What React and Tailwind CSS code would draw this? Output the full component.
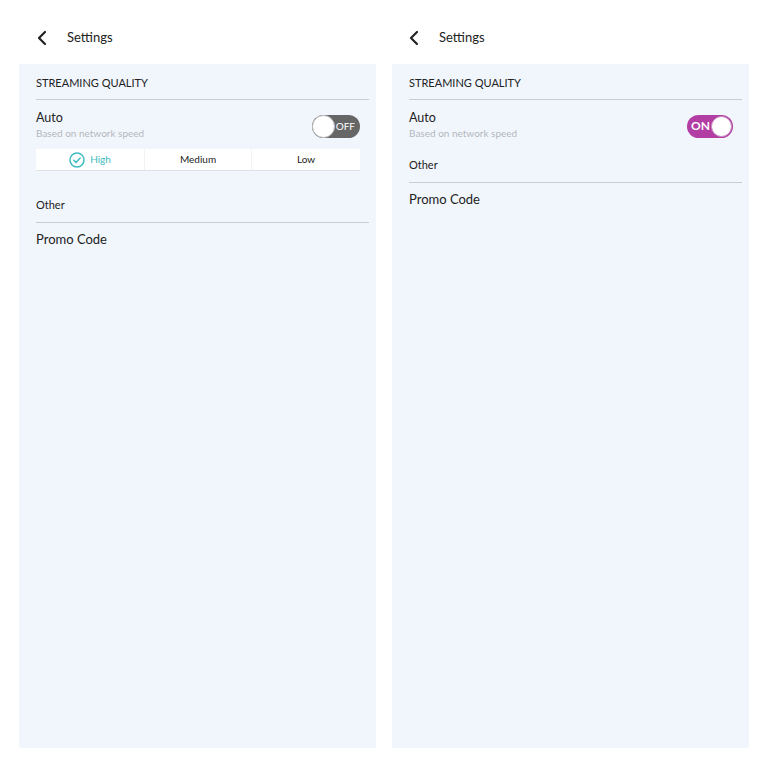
import { ChevronLeft } from 'lucide-react';

function Toggle({ on }) {
  if (on) {
    return (
      <div className="flex h-[23px] w-[46px] items-center justify-between rounded-full bg-[#b23ea3] pl-[4px] pr-[1px]">
        <span className="text-[12px] font-bold leading-none text-white">ON</span>
        <span className="h-[21px] w-[21px] rounded-full border border-[#c78fbf] bg-white" />
      </div>
    );
  }
  return (
    <div className="flex h-[23px] w-[48px] items-center justify-between rounded-full bg-[#666666] pr-[5px]">
      <span className="h-[23px] w-[23px] rounded-full border border-[#bdbdbd] bg-white" />
      <span className="text-[10px] leading-none text-white">OFF</span>
    </div>
  );
}

function Check() {
  return (
    <svg width="16" height="16" viewBox="0 0 16 16" fill="none">
      <circle cx="8" cy="8" r="7" stroke="#3fbcc3" strokeWidth="1.5" />
      <path d="M4.8 8.2l2.2 2.2 4.2-4.4" stroke="#3fbcc3" strokeWidth="1.5" strokeLinecap="round" strokeLinejoin="round" />
    </svg>
  );
}

function Screen({ on, pad }) {
  return (
    <div className="flex w-[357px] flex-col">
      <div className={`flex h-[64px] items-center pt-[11px] ${pad}`}>
        <ChevronLeft className="h-6 w-6 text-[#222]" strokeWidth={2.2} />
        <span className="ml-[13px] text-[13px] text-[#222]">Settings</span>
      </div>
      <div className="flex h-[684px] flex-col bg-[#f1f6fd] pr-[7px] pl-[17px]">
        <div className="flex h-[36px] items-center border-b border-[#c9ccd2] pt-1 text-[11px] text-[#222]">
          STREAMING QUALITY
        </div>
        <div className="flex items-center justify-between pt-[11px] pr-[9px]">
          <div className="flex flex-col">
            <span className="text-[12.5px] leading-[14px] text-[#222]">Auto</span>
            <span className="text-[10px] leading-[16px] text-[#b4b7bc]">Based on network speed</span>
          </div>
          <Toggle on={on} />
        </div>
        {on ? (
          <div className="flex h-[42px] items-end border-b border-[#c9ccd2] pb-[9px] text-[11px] text-[#222]">Other</div>
        ) : (
          <>
            <div className="mt-[8px] mr-[9px] grid h-[22px] grid-cols-3 border-b border-[#dde0e5] bg-white text-[10px] text-[#222]">
              <div className="flex items-center justify-center gap-[5px] text-[#3fbcc3]">
                <Check />
                <span>High</span>
              </div>
              <div className="flex items-center justify-center border-x border-[#f1f2f4]">Medium</div>
              <div className="flex items-center justify-center">Low</div>
            </div>
            <div className="flex h-[52px] items-end border-b border-[#c9ccd2] pb-[9px] text-[11px] text-[#222]">Other</div>
          </>
        )}
        <div className="pt-[8px] text-[13px] leading-[16px] text-[#222]">Promo Code</div>
      </div>
    </div>
  );
}

export default function App() {
  return (
    <div className="flex h-[768px] w-[768px] gap-[16px] bg-white pl-[19px] font-['Lato',sans-serif]">
      <Screen on={false} pad="pl-[11px]" />
      <Screen on={true} pad="pl-[10px]" />
    </div>
  );
}
